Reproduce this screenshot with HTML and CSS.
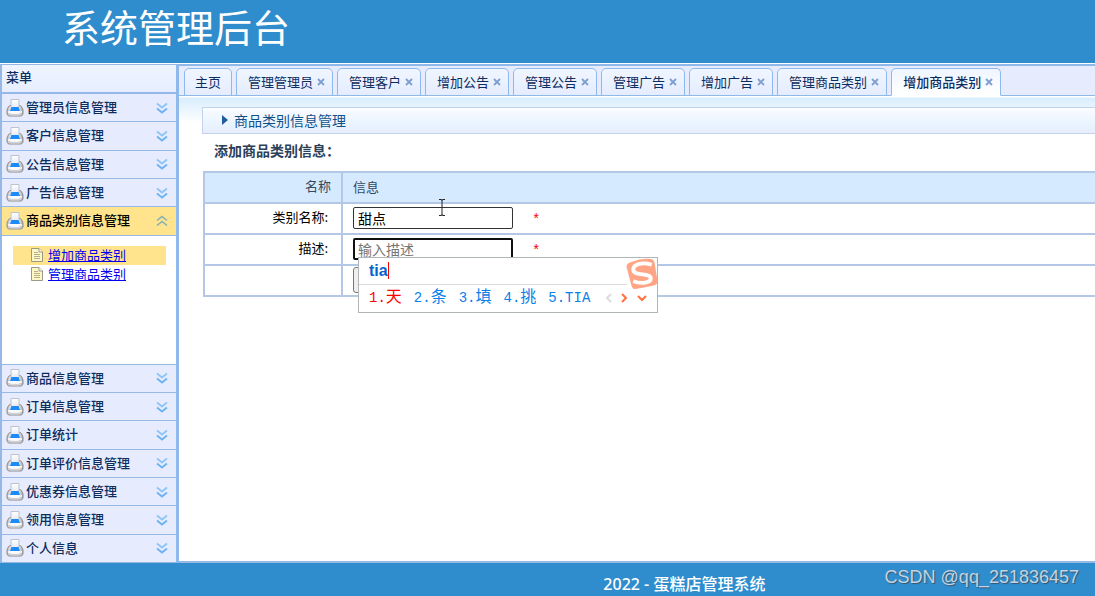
FILE: index.html
```html
<!DOCTYPE html>
<html lang="zh-CN">
<head>
<meta charset="utf-8">
<title>系统管理后台</title>
<link rel="stylesheet" href="styles.css">
</head>
<body>
<svg class="defs" aria-hidden="true">
  <defs>
    <linearGradient id="steel" x1="0" y1="0" x2="1" y2="0"><stop offset="0" stop-color="#b9b9bd"/><stop offset=".3" stop-color="#f4f4f4"/><stop offset=".7" stop-color="#f4f4f4"/><stop offset="1" stop-color="#a4a6aa"/></linearGradient>
    <linearGradient id="paper" x1="0" y1="0" x2="0" y2="1"><stop offset="0" stop-color="#ffffff"/><stop offset="1" stop-color="#e4e9f2"/></linearGradient>
  </defs>
  <symbol id="printer" viewBox="0 0 18 18">
    <path d="M2.500 7.500 4 6.500h10l1.500 1 1.500 3.500v4l-1.500 2h-13L1 15v-4z" fill="url(#steel)" stroke="#8e8e93"/>
    <path d="M5 .5h8v8.500H5z" fill="url(#paper)" stroke="#bcc3cf"/>
    <path d="M5.500 8h7l1.500 4H4z" fill="#1c8bf8"/>
    <path d="M2 13h14" stroke="#fff" stroke-width="1.500"/>
    <path d="M3 15.500h12" stroke="#d2d2d6"/>
  </symbol>
  <symbol id="down" viewBox="0 0 12 12"><path d="m1 1.500 5 4 5-4" fill="none" stroke="#8fc4f7" stroke-width="1.800"/><path d="m1 6.500 5 4 5-4" fill="none" stroke="#6cb2f2" stroke-width="1.800"/></symbol>
  <symbol id="up" viewBox="0 0 12 12"><path d="m1 5.500 5-4 5 4" fill="none" stroke="#80b0b8" stroke-width="1.600"/><path d="m1 10.500 5-4 5 4" fill="none" stroke="#80b0b8" stroke-width="1.600"/></symbol>
  <symbol id="cross" viewBox="0 0 8 8"><path d="m1 1 6 6M7 1 1 7" stroke="#7f9fd0" stroke-width="1.800"/></symbol>
  <symbol id="page" viewBox="0 0 14 16"><path d="M1.500 1.500h7.500l3.500 3.500v9.500h-11z" fill="#fdf7c3" stroke="#9a9a88"/><path d="M9 1.500V5h3.500" fill="#fff" stroke="#9a9a88"/><path d="M4 5.500h4M4 7.500h6M4 9.500h6M4 11.500h6" stroke="#b5b190"/></symbol>
</svg>

<header class="banner"><h1>系统管理后台</h1></header>

<div class="main">
  <nav class="sidebar">
    <h2 class="sidebar-title">菜单</h2>
    <div class="accordion">
      <button class="group"><svg class="printer"><use href="#printer"/></svg><span>管理员信息管理</span><svg class="arrow"><use href="#down"/></svg></button>
      <button class="group"><svg class="printer"><use href="#printer"/></svg><span>客户信息管理</span><svg class="arrow"><use href="#down"/></svg></button>
      <button class="group"><svg class="printer"><use href="#printer"/></svg><span>公告信息管理</span><svg class="arrow"><use href="#down"/></svg></button>
      <button class="group"><svg class="printer"><use href="#printer"/></svg><span>广告信息管理</span><svg class="arrow"><use href="#down"/></svg></button>
      <button class="group open"><svg class="printer"><use href="#printer"/></svg><span>商品类别信息管理</span><svg class="arrow"><use href="#up"/></svg></button>
      <ul class="links">
        <li class="current"><svg class="page"><use href="#page"/></svg><a href="#">增加商品类别</a></li>
        <li><svg class="page"><use href="#page"/></svg><a href="#">管理商品类别</a></li>
      </ul>
      <button class="group"><svg class="printer"><use href="#printer"/></svg><span>商品信息管理</span><svg class="arrow"><use href="#down"/></svg></button>
      <button class="group"><svg class="printer"><use href="#printer"/></svg><span>订单信息管理</span><svg class="arrow"><use href="#down"/></svg></button>
      <button class="group"><svg class="printer"><use href="#printer"/></svg><span>订单统计</span><svg class="arrow"><use href="#down"/></svg></button>
      <button class="group"><svg class="printer"><use href="#printer"/></svg><span>订单评价信息管理</span><svg class="arrow"><use href="#down"/></svg></button>
      <button class="group"><svg class="printer"><use href="#printer"/></svg><span>优惠券信息管理</span><svg class="arrow"><use href="#down"/></svg></button>
      <button class="group"><svg class="printer"><use href="#printer"/></svg><span>领用信息管理</span><svg class="arrow"><use href="#down"/></svg></button>
      <button class="group"><svg class="printer"><use href="#printer"/></svg><span>个人信息</span><svg class="arrow"><use href="#down"/></svg></button>
    </div>
  </nav>

  <main class="workspace">
    <div class="tabs">
      <button class="tab home">主页</button>
      <button class="tab">管理管理员<svg class="cross"><use href="#cross"/></svg></button>
      <button class="tab">管理客户<svg class="cross"><use href="#cross"/></svg></button>
      <button class="tab">增加公告<svg class="cross"><use href="#cross"/></svg></button>
      <button class="tab">管理公告<svg class="cross"><use href="#cross"/></svg></button>
      <button class="tab">管理广告<svg class="cross"><use href="#cross"/></svg></button>
      <button class="tab">增加广告<svg class="cross"><use href="#cross"/></svg></button>
      <button class="tab">管理商品类别<svg class="cross"><use href="#cross"/></svg></button>
      <button class="tab active">增加商品类别<svg class="cross"><use href="#cross"/></svg></button>
    </div>
    <div class="content">
      <h2 class="section-title"><svg class="marker" viewBox="0 0 6 10"><path d="m0 0 6 5-6 5z" fill="#1f5c9e"/></svg>商品类别信息管理</h2>
      <form>
        <h3 class="form-title">添加商品类别信息：</h3>
        <table class="form-table">
          <thead><tr><th class="name">名称</th><th>信息</th></tr></thead>
          <tbody>
            <tr>
              <td class="name"><label for="category">类别名称:</label></td>
              <td><div class="field">
                <input type="text" id="category" value="甜点"><span class="required">*</span>
                <svg class="text-cursor" viewBox="0 0 8 17"><path d="M1 .5h2.500l.5 1 .5-1H7M1 16.500h2.500l.5-1 .5 1H7M4 1v15" fill="none" stroke="#222"/></svg>
              </div></td>
            </tr>
            <tr>
              <td class="name"><label for="description">描述:</label></td>
              <td><div class="field">
                <input type="text" id="description" class="focused" placeholder="输入描述"><span class="required">*</span>
                <div class="ime">
                  <div class="composition">tia</div>
                  <div class="candidates">
                    <span class="first">1.<b>天</b></span><span>2.<b>条</b></span><span>3.<b>填</b></span><span>4.<b>挑</b></span><span>5.TIA</span>
                    <svg class="pager" viewBox="0 0 42 10"><g fill="none" stroke-width="2"><path d="M6 1 2 5l4 4" stroke="#dcdcdc"/><path d="m17 1 4 4-4 4" stroke="#ff7040"/><path d="m33 3 4 4 4-4" stroke="#ff7040"/></g></svg>
                  </div>
                  <svg class="ime-logo" viewBox="0 0 32 32"><path d="M5 4Q15 0 25 1q3 0 4 4l3 19q0 3-3 4-9 2-20 4-3 0-4-4L0 9q0-4 5-5z" fill="#ffa586"/><path d="M26 7C17 4 7 6 7 12c0 7 18 3 18 9 0 5-10 6-18 3" fill="none" stroke="#fff" stroke-width="4"/></svg>
                </div>
              </div></td>
            </tr>
            <tr>
              <td class="name"></td>
              <td><div class="field"><button type="button" class="submit" aria-label="提交"></button></div></td>
            </tr>
          </tbody>
        </table>
      </form>
    </div>
  </main>
</div>

<footer class="footer"><span>2022 - 蛋糕店管理系统</span><span class="watermark">CSDN @qq_251836457</span></footer>
</body>
</html>
```

FILE: styles.css
```css
* { box-sizing: border-box; }

body {
  margin: 0;
  height: 100vh;
  display: flex;
  flex-direction: column;
  overflow: hidden;
  background: #fff;
  color: #000;
  font: 13px/18px "Noto Sans CJK SC", sans-serif;
}

h1, h2, h3, ul { margin: 0; padding: 0; font-weight: 400; }
button, input { font: inherit; }
svg { flex: none; }
.defs { position: absolute; width: 0; height: 0; }

.banner {
  flex: none;
  padding: 0 62px 11px;
  background: #2f8dcd;
  color: #fff;
}
.banner h1 { font-size: 38px; line-height: 52px; }

.main {
  flex: 1;
  min-height: 0;
  display: flex;
  margin-top: 1px;
}

/* Sidebar */
.sidebar {
  flex: none;
  width: 179px;
  display: flex;
  flex-direction: column;
  border: solid #95b8e7;
  border-width: 1px 3px 0 2px;
  border-right-color: #8fb9ea;
}
.sidebar-title {
  padding: 3px 4px 6px;
  border-bottom: 2px solid #95b8e7;
  background: linear-gradient(#eff5ff, #e6eeff);
  color: #0e2d5f;
  font-size: 13px;
  font-weight: 500;
}
.accordion {
  flex: 1;
  min-height: 0;
  display: flex;
  flex-direction: column;
}
.group {
  flex: 1;
  min-height: 0;
  display: flex;
  align-items: center;
  padding: 0 8px 0 4px;
  border: 0;
  border-bottom: 1px solid #95b8e7;
  background: #e6ecfd;
  color: #0e2d5f;
  font-weight: 500;
  text-align: left;
}
.group span { flex: 1; margin-left: 2px; padding-bottom: 1px; white-space: nowrap; }
.group.open { background: #ffe48d; color: #000; }
.printer { width: 18px; height: 18px; }
.arrow { width: 12px; height: 12px; }
.links {
  flex: none;
  height: 129px;
  padding: 10px 10px 0 11px;
  border-bottom: 1px solid #95b8e7;
  list-style: none;
}
.links li { display: flex; align-items: center; height: 19px; padding-left: 17px; }
.links .current { background: #ffe48d; }
.links a { margin-left: 4px; color: #00e; }
.page { width: 14px; height: 16px; }

/* Tabs */
.workspace {
  flex: 1;
  min-width: 0;
  display: flex;
  flex-direction: column;
  border-top: 2px solid #8fb9ea;
  border-bottom: 2px solid #95b8e7;
}
.tabs {
  flex: none;
  display: flex;
  gap: 4px;
  padding: 2px 4px 0 5px;
  border-bottom: 1px solid #8fb9ea;
  background: #e6ecfd;
}
.tab {
  display: flex;
  align-items: center;
  gap: 4px;
  height: 28px;
  margin-bottom: -1px;
  padding: 0 7px 0 11px;
  border: 1px solid #8fb9ea;
  border-radius: 5px 5px 0 0;
  background: linear-gradient(#f0f6ff, #e4ecff);
  color: #0e2d5f;
  white-space: nowrap;
}
.tab.home { padding: 0 10px; }
.tab.active {
  border-bottom-color: #fff;
  background: linear-gradient(#eff5ff, #fff);
  font-weight: 500;
}
.cross { width: 8px; height: 8px; }

/* Content */
.content {
  flex: 1;
  padding: 11px 0 0 23px;
  background: linear-gradient(#fff 1px, #d9edfd 2px, #fff 27px) no-repeat;
  overflow: hidden;
}
.section-title {
  display: flex;
  align-items: center;
  height: 27px;
  padding: 0 0 1px 19px;
  border: 1px solid #c3d3ee;
  border-right: 0;
  background: linear-gradient(#fafcff, #e7f3ff 70%, #e8edfc);
  color: #105088;
  font-size: 14px;
}
.marker { width: 6px; height: 10px; margin-right: 6px; }
.form-title {
  padding: 7px 12px 12px;
  color: #2c4058;
  font-size: 14px;
  line-height: 18px;
  font-weight: 700;
}
.form-table {
  width: 100%;
  margin-left: 1px;
  border-collapse: collapse;
  table-layout: fixed;
}
.form-table th, .form-table td {
  height: 31px;
  padding: 0 10px 2px;
  border: 2px solid #b5c7e6;
  border-right: 0;
  text-align: left;
}
.form-table th { background: #d5eaff; color: #34495e; font-weight: 400; }
.form-table .name { width: 138px; padding-bottom: 4px; text-align: right; }
.form-table td.name { padding-right: 13px; }
.field { position: relative; display: flex; align-items: center; }
.field input {
  width: 160px;
  height: 22px;
  padding: 0 4px;
  border: 1px solid #333;
  border-radius: 2px;
  outline: 0;
  font-size: 14px;
}
.field input.focused { padding: 0 3px; border: 2px solid #101010; }
.field input::placeholder { color: #757575; }
.required { margin: 4px 0 0 19px; color: #f00; font: 14px/18px "Liberation Mono", monospace; }
.submit { width: 44px; height: 26px; border: 1px solid #777; border-radius: 3px; background: #efefef; }
.text-cursor { position: absolute; left: 85px; top: -8px; width: 8px; height: 17px; }

/* Input method window */
.ime {
  position: absolute;
  left: 5px;
  top: 19px;
  z-index: 1;
  width: 300px;
  border: 1px solid #b0b5b8;
  background: #fff;
}
.composition {
  margin-right: 30px;
  padding: 3px 0 3px 10px;
  border-bottom: 1px solid #dcdcdc;
  color: #0662cf;
  font: bold 16px/20px "Liberation Sans", sans-serif;
}
.composition::after { content: ""; border-right: 1px solid #f00; }
.candidates {
  display: flex;
  align-items: center;
  gap: 12px;
  height: 27px;
  padding-left: 10px;
  color: #0a80e8;
  font: 14px/24px "Liberation Mono", "Noto Sans CJK SC", monospace;
  white-space: nowrap;
}
.candidates b { font-size: 16px; font-weight: 400; }
.candidates .first { color: #f00; }
.pager { width: 42px; height: 10px; margin-left: 3px; }
.ime-logo { position: absolute; right: -1px; top: 0; width: 32px; height: 31px; }

/* Footer */
.footer {
  position: relative;
  flex: none;
  padding: 9px 0 0 25%;
  background: #2f8dcd;
  color: #fff;
  font: 500 16px/24px "Noto Sans", "Noto Sans CJK SC", sans-serif;
  text-align: center;
}
.watermark {
  position: absolute;
  right: 16px;
  top: 2px;
  color: #c5d3df;
  font: 18px/24px "Liberation Sans", sans-serif;
  text-shadow: 1px 1px 1px #38556e;
}
```
